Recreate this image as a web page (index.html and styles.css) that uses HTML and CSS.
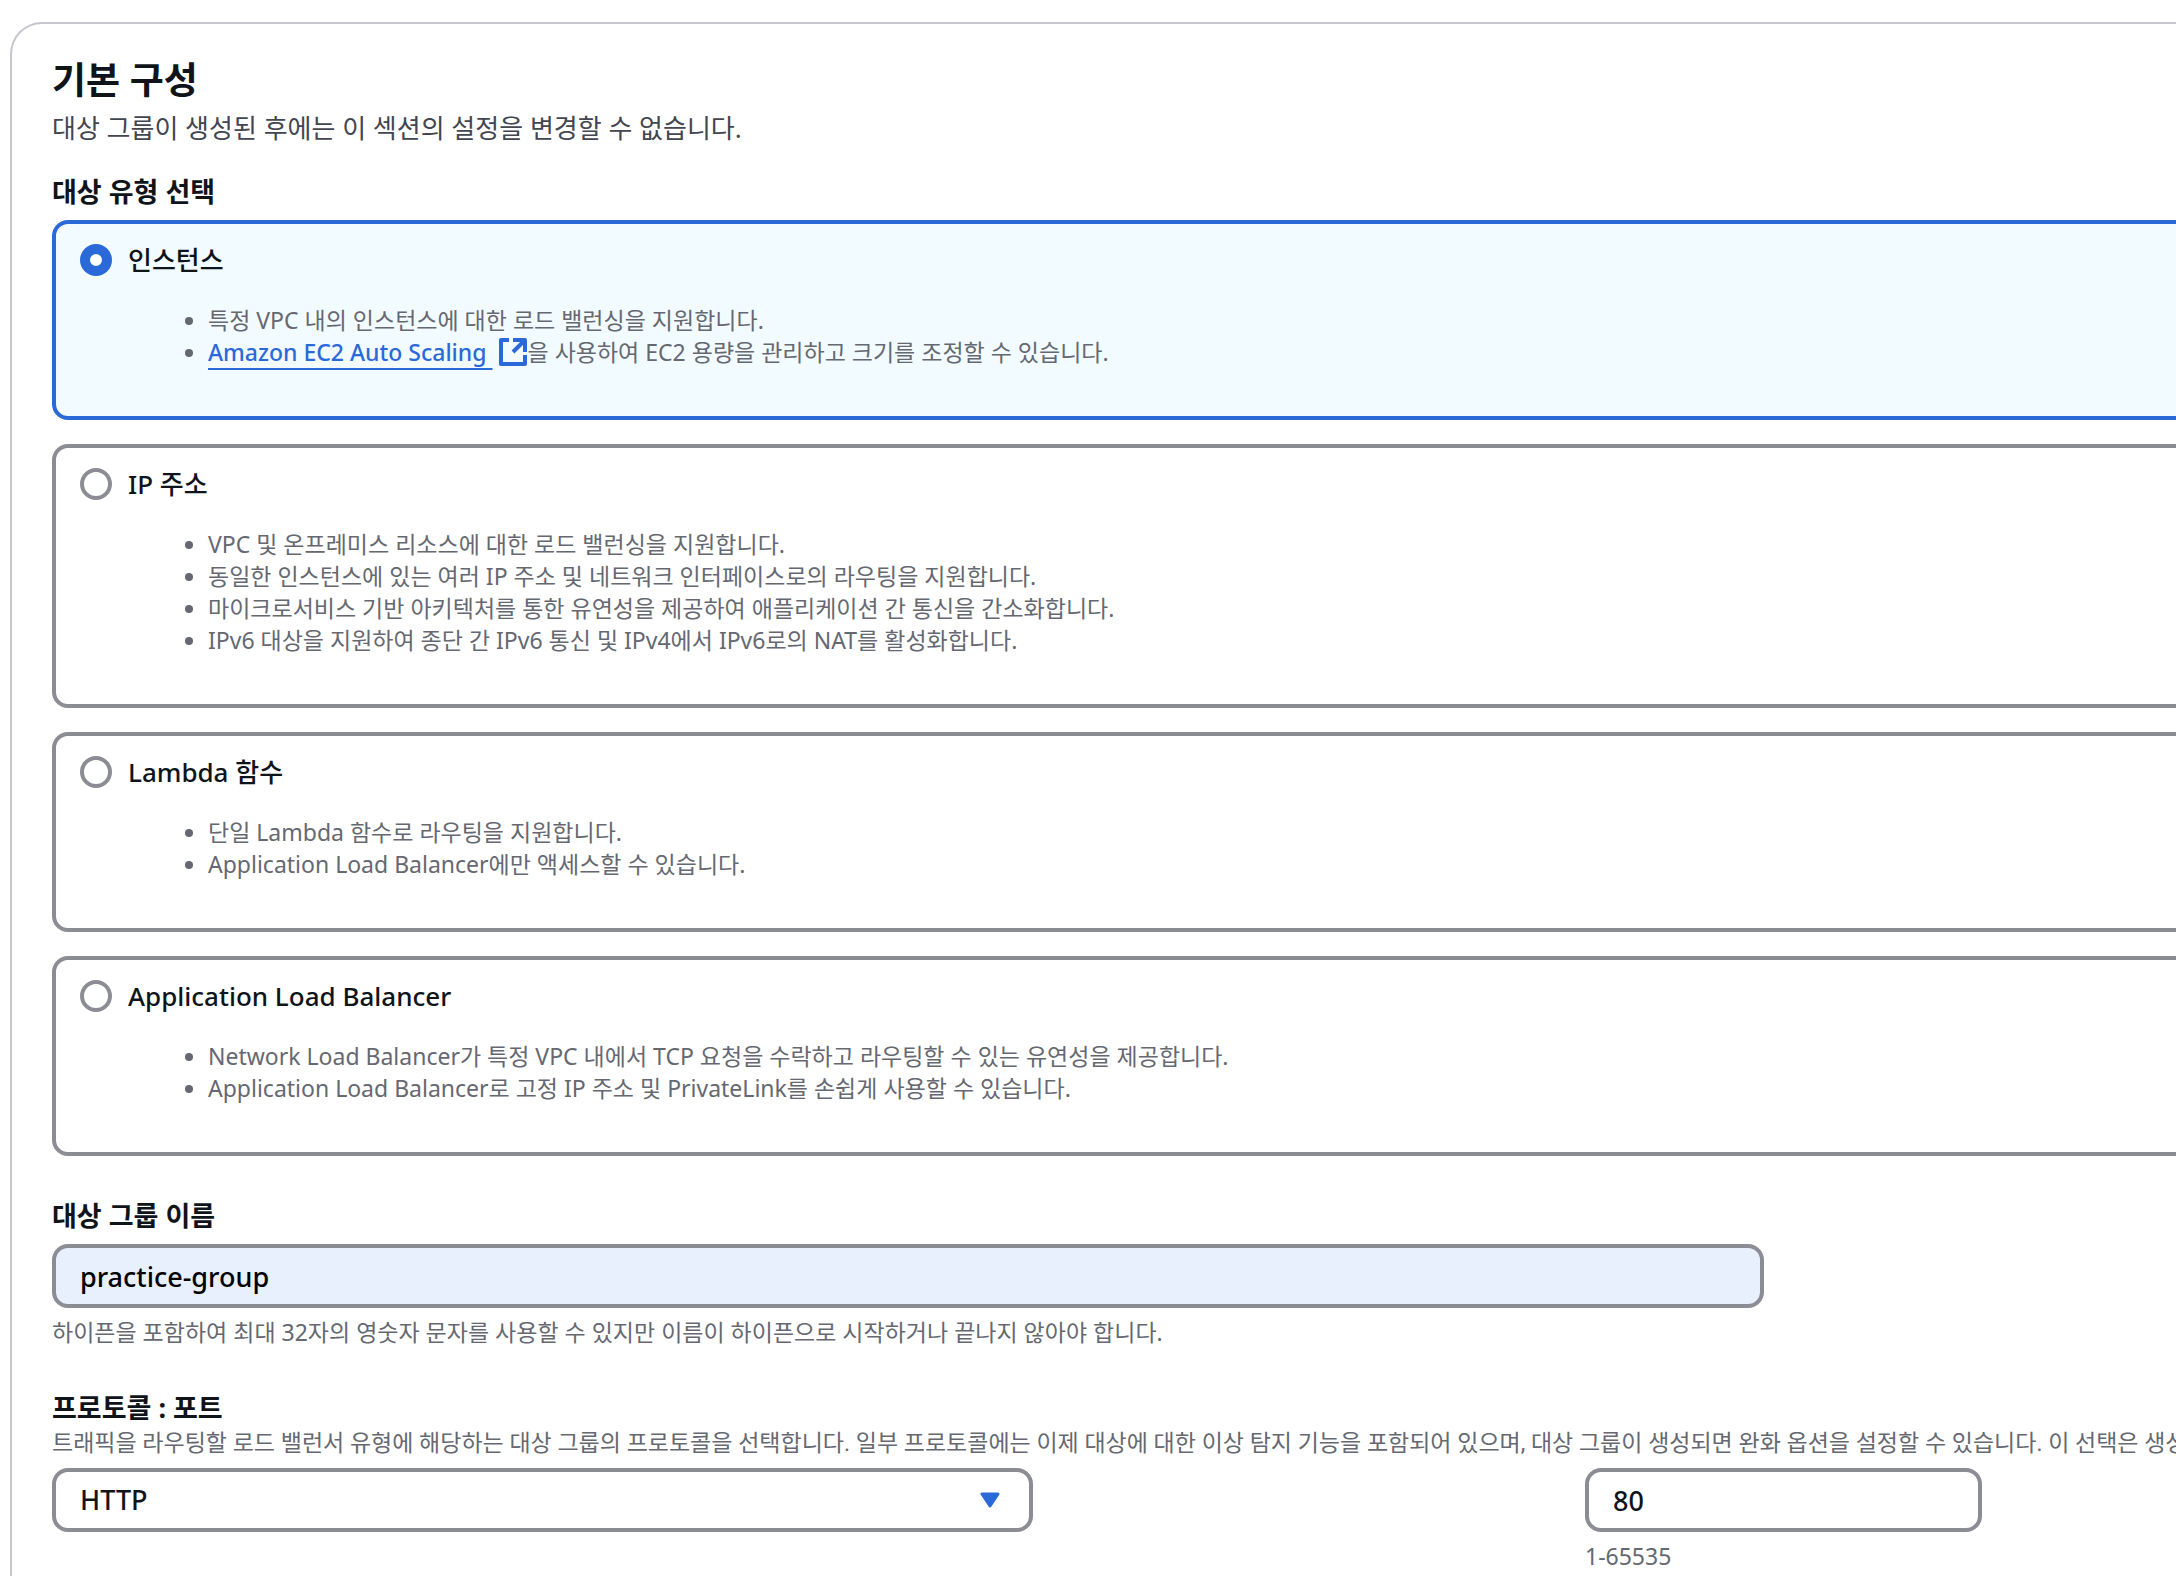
FILE: index.html
```
<!DOCTYPE html>
<html lang="ko">
<head>
<meta charset="utf-8">
<title>기본 구성</title>
<link rel="stylesheet" href="styles.css">
</head>
<body>
<main class="container">
  <header class="header">
    <h2 class="title">기본 구성</h2>
    <p class="intro">대상 그룹이 생성된 후에는 이 섹션의 설정을 변경할 수 없습니다.</p>
  </header>

  <form class="form">
    <fieldset class="field tiles">
      <legend class="label">대상 유형 선택</legend>
      <div class="tile tile-selected">
        <label class="tile-label"><input class="radio" type="radio" name="target" checked><span>인스턴스</span></label>
        <ul class="list">
          <li>특정 VPC 내의 인스턴스에 대한 로드 밸런싱을 지원합니다.</li>
          <li><a class="link" href="#"><span class="link-text">Amazon EC2 Auto Scaling&nbsp;</span><svg class="link-icon" viewBox="0 0 28 28" aria-hidden="true"><path d="M10 2H2v24h24v-9M14 2h12v12M25 3 14 14"/></svg></a>을 사용하여 EC2 용량을 관리하고 크기를 조정할 수 있습니다.</li>
        </ul>
      </div>
      <div class="tile">
        <label class="tile-label"><input class="radio" type="radio" name="target"><span>IP 주소</span></label>
        <ul class="list">
          <li>VPC 및 온프레미스 리소스에 대한 로드 밸런싱을 지원합니다.</li>
          <li>동일한 인스턴스에 있는 여러 IP 주소 및 네트워크 인터페이스로의 라우팅을 지원합니다.</li>
          <li>마이크로서비스 기반 아키텍처를 통한 유연성을 제공하여 애플리케이션 간 통신을 간소화합니다.</li>
          <li>IPv6 대상을 지원하여 종단 간 IPv6 통신 및 IPv4에서 IPv6로의 NAT를 활성화합니다.</li>
        </ul>
      </div>
      <div class="tile">
        <label class="tile-label"><input class="radio" type="radio" name="target"><span>Lambda 함수</span></label>
        <ul class="list">
          <li>단일 Lambda 함수로 라우팅을 지원합니다.</li>
          <li>Application Load Balancer에만 액세스할 수 있습니다.</li>
        </ul>
      </div>
      <div class="tile">
        <label class="tile-label"><input class="radio" type="radio" name="target"><span>Application Load Balancer</span></label>
        <ul class="list">
          <li>Network Load Balancer가 특정 VPC 내에서 TCP 요청을 수락하고 라우팅할 수 있는 유연성을 제공합니다.</li>
          <li>Application Load Balancer로 고정 IP 주소 및 PrivateLink를 손쉽게 사용할 수 있습니다.</li>
        </ul>
      </div>
    </fieldset>

    <div class="field">
      <label class="label" for="name">대상 그룹 이름</label>
      <input class="control control-name" id="name" type="text" value="practice-group" aria-describedby="name-hint">
      <p class="hint" id="name-hint">하이픈을 포함하여 최대 32자의 영숫자 문자를 사용할 수 있지만 이름이 하이픈으로 시작하거나 끝나지 않아야 합니다.</p>
    </div>

    <div class="field">
      <label class="label label-tight" for="protocol">프로토콜 : 포트</label>
      <p class="description">트래픽을 라우팅할 로드 밸런서 유형에 해당하는 대상 그룹의 프로토콜을 선택합니다. 일부 프로토콜에는 이제 대상에 대한 이상 탐지 기능을 포함되어 있으며, 대상 그룹이 생성되면 완화 옵션을 설정할 수 있습니다. 이 선택은 생성</p>
      <div class="protocol-row">
        <div class="select">
          <select class="control" id="protocol"><option>HTTP</option></select>
          <svg class="caret" viewBox="0 0 20 16" aria-hidden="true"><path d="M2 2h16l-8 12z"/></svg>
        </div>
        <div class="port">
          <input class="control" id="port" type="text" inputmode="numeric" value="80" aria-label="포트" aria-describedby="port-hint">
          <p class="hint" id="port-hint">1-65535</p>
        </div>
      </div>
    </div>
  </form>
</main>
</body>
</html>
```
FILE: styles.css
```
:root {
  --blue: #2b69d9;
  --gray: #8c8c94;
  --text: #0f141a;
  --muted: #656871;
}

* { box-sizing: border-box; }

body {
  margin: 0;
  padding-top: 22px;
  overflow-x: clip;
  background: #fff;
  color: var(--text);
  font: 400 26px/40px "Noto Sans", "Noto Sans CJK KR", sans-serif;
}

h2, p, ul, fieldset { margin: 0; padding: 0; }

/* The panel is wider than the window and runs off its right edge. */
.container {
  margin: 0 -201px 0 10px;
  padding: 32px 40px 4px;
  border: 2px solid #c6c6cd;
  border-bottom: 0;
  border-radius: 32px 32px 0 0;
}

.header {
  display: flex;
  flex-direction: column;
  gap: 4px;
  margin-bottom: 24px;
}

.title { font-size: 37px; line-height: 48px; font-weight: 700; }
.intro { color: #424650; }

.form { display: flex; flex-direction: column; gap: 40px; }
.field { display: block; min-width: 0; border: 0; }

.label {
  display: block;
  margin-bottom: 8px;
  padding: 0;
  font-size: 27px;
  line-height: 40px;
  font-weight: 700;
}
.label-tight { margin-bottom: 0; }

.tile {
  padding: 16px 24px 48px;
  border: 4px solid var(--gray);
  border-radius: 16px;
}
.tile + .tile { margin-top: 24px; }
.tile-selected { border-color: var(--blue); background: #f2fbff; }

.tile-label {
  display: flex;
  align-items: center;
  gap: 16px;
  font-weight: 500;
}

.radio {
  appearance: none;
  width: 32px;
  height: 32px;
  margin: 0;
  border: 4px solid var(--gray);
  border-radius: 50%;
  background: #fff;
}
.radio:checked { border: 10px solid var(--blue); }

.list {
  margin-top: 24px;
  padding-left: 128px;
  color: var(--muted);
  font-size: 23px;
  line-height: 32px;
}

.link { color: var(--blue); font-weight: 500; text-decoration: none; }
.link-text {
  text-decoration: underline 2px;
  text-underline-offset: 7px;
  text-decoration-skip-ink: none;
}
.link-icon {
  width: 28px;
  height: 28px;
  margin: 2px 1px 0 6px;
  vertical-align: top;
  fill: none;
  stroke: currentColor;
  stroke-width: 4;
  stroke-linejoin: round;
}

.control {
  appearance: none;
  display: block;
  width: 100%;
  height: 64px;
  padding: 0 24px;
  border: 4px solid var(--gray);
  border-radius: 16px;
  background: #fff;
  color: var(--text);
  font: inherit;
  font-size: 27px;
  font-weight: 500;
}
.control-name { width: 75%; background: #e8effd; color: #000; }

.hint, .description {
  color: var(--muted);
  font-size: 23px;
  line-height: 32px;
}
.hint { margin-top: 8px; }
.description {
  margin-bottom: 8px;
  font-family: Roboto, "Noto Sans CJK KR", sans-serif;
  white-space: nowrap;
}

.protocol-row {
  display: grid;
  grid-template-columns: 981fr 552fr 397fr 353fr;
}
.select { position: relative; }
.port { grid-column: 3; }

.caret {
  position: absolute;
  top: 24px;
  right: 33px;
  width: 20px;
  height: 16px;
  fill: var(--blue);
  stroke: var(--blue);
  stroke-width: 3;
  stroke-linejoin: round;
  pointer-events: none;
}
```
